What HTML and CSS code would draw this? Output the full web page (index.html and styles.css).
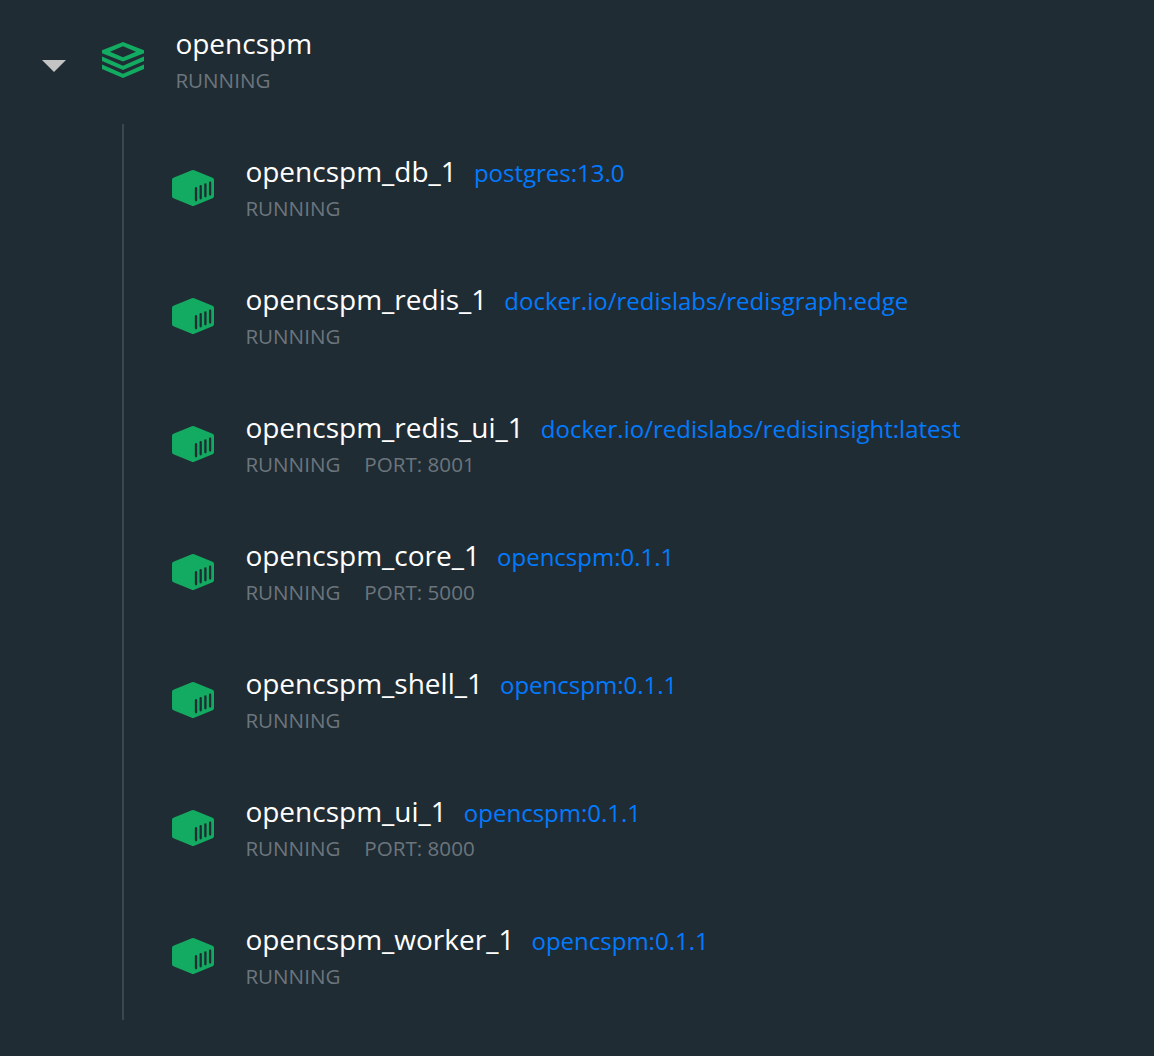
FILE: index.html
```html
<!DOCTYPE html>
<html lang="en">
<head>
<meta charset="utf-8">
<title>Containers</title>
<link rel="stylesheet" href="styles.css">
</head>
<body>
<svg class="defs" width="0" height="0" aria-hidden="true">
  <symbol id="cube" viewBox="0 0 42 36">
    <path fill="#13aa61" d="M19.8.3q1.2-.5 2.4 0L40.6 7.800Q42 8.400 42 9.800V26.200Q42 27.600 40.600 28.200L22.200 35.700Q21 36.200 19.800 35.700L1.400 28.200Q0 27.600 0 26.200V9.800Q0 8.400 1.400 7.800Z"/>
    <path stroke="#202c33" stroke-width="2.3" stroke-linecap="round" d="M24 18.200V30.300M28.700 16.200V28.300M33.400 14.300V26.300M38.100 12.600V24.600"/>
  </symbol>
</svg>
<main class="group">
  <header class="group-head">
    <svg class="caret" width="24" height="12" viewBox="0 0 24 12"><path fill="#c4c4c4" d="M0 0H24L12 12Z"/></svg>
    <svg class="icon" width="42" height="36" viewBox="0 0 42 36">
      <path fill="#13aa61" fill-rule="evenodd" d="M21 0L42 8.200V11.300L21 19.500L0 11.300V8.200ZM21 4.200L8 9.750L21 15.300L34 9.750Z"/>
      <path fill="#13aa61" d="M0 14.600L21 23.800L42 14.600V18.900L21 28L0 18.900ZM0 22.600L21 31.800L42 22.600V26.900L21 36L0 26.900Z"/>
    </svg>
    <div class="info">
      <div class="title"><span class="name">opencspm</span></div>
      <div class="status"><span>RUNNING</span></div>
    </div>
  </header>
  <ul class="list">
    <li class="row">
      <svg class="icon" width="42" height="36"><use href="#cube"/></svg>
      <div class="info">
        <div class="title"><span class="name">opencspm_db_1</span><a class="image">postgres:13.0</a></div>
        <div class="status"><span>RUNNING</span></div>
      </div>
    </li>
    <li class="row">
      <svg class="icon" width="42" height="36"><use href="#cube"/></svg>
      <div class="info">
        <div class="title"><span class="name">opencspm_redis_1</span><a class="image">docker.io/redislabs/redisgraph:edge</a></div>
        <div class="status"><span>RUNNING</span></div>
      </div>
    </li>
    <li class="row">
      <svg class="icon" width="42" height="36"><use href="#cube"/></svg>
      <div class="info">
        <div class="title"><span class="name">opencspm_redis_ui_1</span><a class="image">docker.io/redislabs/redisinsight:latest</a></div>
        <div class="status"><span>RUNNING</span><span>PORT: 8001</span></div>
      </div>
    </li>
    <li class="row">
      <svg class="icon" width="42" height="36"><use href="#cube"/></svg>
      <div class="info">
        <div class="title"><span class="name">opencspm_core_1</span><a class="image">opencspm:0.1.1</a></div>
        <div class="status"><span>RUNNING</span><span>PORT: 5000</span></div>
      </div>
    </li>
    <li class="row">
      <svg class="icon" width="42" height="36"><use href="#cube"/></svg>
      <div class="info">
        <div class="title"><span class="name">opencspm_shell_1</span><a class="image">opencspm:0.1.1</a></div>
        <div class="status"><span>RUNNING</span></div>
      </div>
    </li>
    <li class="row">
      <svg class="icon" width="42" height="36"><use href="#cube"/></svg>
      <div class="info">
        <div class="title"><span class="name">opencspm_ui_1</span><a class="image">opencspm:0.1.1</a></div>
        <div class="status"><span>RUNNING</span><span>PORT: 8000</span></div>
      </div>
    </li>
    <li class="row">
      <svg class="icon" width="42" height="36"><use href="#cube"/></svg>
      <div class="info">
        <div class="title"><span class="name">opencspm_worker_1</span><a class="image">opencspm:0.1.1</a></div>
        <div class="status"><span>RUNNING</span></div>
      </div>
    </li>
  </ul>
</main>
</body>
</html>
```
FILE: styles.css
```css
* {
  box-sizing: border-box;
}

body {
  margin: 0;
  height: 1056px;
  background: #202c33;
  font-family: "Open Sans", sans-serif;
  overflow: hidden;
}

svg {
  display: block;
  flex: none;
}

.defs {
  height: 0;
}

.group-head {
  display: flex;
  align-items: center;
  height: 124px;
  padding: 0 0 4px 42px;
}

.caret {
  margin: 12px 36px 0 0;
}

.info {
  margin-left: 31.4px;
  white-space: nowrap;
}

.title {
  display: flex;
  align-items: baseline;
  gap: 17px;
  height: 38px;
  line-height: 38px;
}

.name {
  color: #fff;
  font-size: 28px;
}

.image {
  color: #007bff;
  font-size: 24px;
}

.status {
  display: flex;
  gap: 24px;
  height: 34px;
  padding-top: 2px;
  line-height: 32px;
  padding-top: 2px;
  color: #6c757d;
  font-size: 20.6px;
}

.list {
  margin: 0 0 0 122px;
  padding: 0;
  list-style: none;
  border-left: 2px solid #3b474e;
}

.row {
  display: flex;
  align-items: center;
  height: 128px;
  padding-left: 48px;
}
```
